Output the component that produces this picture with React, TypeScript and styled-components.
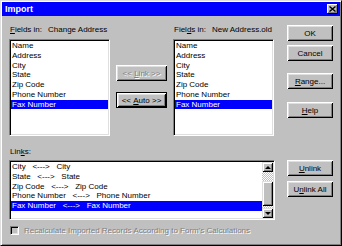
import React from "react";
import styled, { createGlobalStyle } from "styled-components";

const GlobalStyle = createGlobalStyle`
  html, body {
    margin: 0;
    padding: 0;
    background: #c0c0c0;
  }
  body {
    font-family: "Liberation Sans", Arial, sans-serif;
    font-size: 8px;
    color: #000;
  }
`;

const Window = styled.div`
  width: 342px;
  height: 246px;
  box-sizing: border-box;
  background: #c0c0c0;
  border: 1px solid;
  border-color: #dfdfdf #000 #000 #dfdfdf;
  box-shadow: inset 1px 1px #fff, inset -1px -1px #808080;
  padding: 1px;
  display: flex;
  flex-direction: column;
`;

const TitleBar = styled.div`
  height: 14px;
  background: #0000ff;
  display: flex;
  align-items: center;
  justify-content: space-between;
  padding: 0 2px 0 3px;
`;

const Title = styled.span`
  color: #fff;
  font-weight: bold;
  font-size: 9px;
  line-height: 14px;
`;

const CloseButton = styled.div`
  width: 11px;
  height: 10px;
  box-sizing: border-box;
  background: #c0c0c0;
  box-shadow: inset -1px -1px #000, inset 1px 1px #fff, inset -2px -2px #808080;
  display: flex;
  align-items: center;
  justify-content: center;
`;

const Body = styled.div`
  flex: 1;
  display: flex;
  flex-direction: column;
  padding: 9px 7px 0 7px;
`;

const TopGrid = styled.div`
  display: grid;
  grid-template-columns: 101px 51px 101px 1fr;
  column-gap: 6px;
`;

const Panel = styled.div`
  display: flex;
  flex-direction: column;
`;

const LabelRow = styled.div`
  display: flex;
  height: 10px;
  line-height: 10px;
  padding-left: 1px;
  white-space: nowrap;
`;

const LabelName = styled.span`
  width: 38px;
`;

const Key = styled.span`
  text-decoration: underline;
`;

const ListBox = styled.div<{ $height: number; $top: number }>`
  height: ${(p) => p.$height}px;
  margin-top: ${(p) => p.$top}px;
  box-sizing: border-box;
  background: #fff;
  border: 1px solid;
  border-color: #808080 #fff #fff #808080;
  box-shadow: inset 1px 1px #000, inset -1px -1px #dfdfdf;
  padding: 1px;
  display: flex;
  overflow: hidden;
`;

const Items = styled.div`
  flex: 1;
  display: flex;
  flex-direction: column;
`;

const Item = styled.div<{ $selected?: boolean }>`
  height: 9.75px;
  line-height: 9.75px;
  padding-left: 1px;
  white-space: pre;
  background: ${(p) => (p.$selected ? "#0000ff" : "transparent")};
  color: ${(p) => (p.$selected ? "#fff" : "#000")};
`;

const MidColumn = styled.div`
  display: flex;
  flex-direction: column;
  gap: 11px;
  padding-top: 40px;
`;

const ButtonColumn = styled.div<{ $top?: number }>`
  display: flex;
  flex-direction: column;
  justify-self: end;
  width: 46px;
  padding-top: ${(p) => p.$top ?? 0}px;
`;

const Button = styled.div<{ $gap?: number; $default?: boolean; $disabled?: boolean }>`
  height: 16px;
  margin-top: ${(p) => p.$gap ?? 0}px;
  box-sizing: border-box;
  background: #c0c0c0;
  display: flex;
  align-items: center;
  justify-content: center;
  white-space: pre;
  border: ${(p) => (p.$default ? "1px solid #000" : "none")};
  box-shadow: inset 1px 1px #fff, inset -1px -1px #000, inset 2px 2px #dfdfdf,
    inset -2px -2px #808080;
  color: ${(p) => (p.$disabled ? "#808080" : "#000")};
  text-shadow: ${(p) => (p.$disabled ? "1px 1px #fff" : "none")};
`;

const LinksGrid = styled.div`
  display: grid;
  grid-template-columns: 1fr 46px;
  column-gap: 12px;
  margin-top: 11px;
`;

const Scrollbar = styled.div`
  width: 11px;
  display: flex;
  flex-direction: column;
`;

const ArrowButton = styled.div<{ $down?: boolean }>`
  height: 10px;
  background: #c0c0c0;
  box-shadow: inset 1px 1px #dfdfdf, inset -1px -1px #000, inset 2px 2px #fff,
    inset -2px -2px #808080;
  display: flex;
  align-items: center;
  justify-content: center;
  &::after {
    content: "";
    border-left: 3px solid transparent;
    border-right: 3px solid transparent;
    ${(p) =>
      p.$down ? "border-top: 3px solid #000;" : "border-bottom: 3px solid #000;"}
  }
`;

const Track = styled.div<{ $height: number }>`
  height: ${(p) => p.$height}px;
  background-color: #fff;
  background-image: repeating-conic-gradient(#c0c0c0 0 25%, #fff 0 50%);
  background-size: 2px 2px;
`;

const Thumb = styled.div`
  height: 25px;
  background: #c0c0c0;
  box-shadow: inset 1px 1px #dfdfdf, inset -1px -1px #000, inset 2px 2px #fff,
    inset -2px -2px #808080;
`;

const CheckRow = styled.div`
  display: flex;
  align-items: center;
  gap: 5px;
  margin-top: 6px;
  padding-left: 1px;
  height: 9px;
`;

const CheckBox = styled.div`
  width: 9px;
  height: 9px;
  box-sizing: border-box;
  background: #c0c0c0;
  border: 1px solid;
  border-color: #808080 #fff #fff #808080;
  box-shadow: inset 1px 1px #000, inset -1px -1px #dfdfdf;
`;

const DisabledText = styled.span`
  color: #808080;
  text-shadow: 1px 1px #fff;
  white-space: nowrap;
`;

const fields = ["Name", "Address", "City", "State", "Zip Code", "Phone Number", "Fax Number"];
const links = ["City", "State", "Zip Code", "Phone Number", "Fax Number"];

const FieldList = ({ label, source }: { label: React.ReactNode; source: string }) => (
  <Panel>
    <LabelRow>
      <LabelName>{label}</LabelName>
      <span>{source}</span>
    </LabelRow>
    <ListBox $height={97} $top={4}>
      <Items>
        {fields.map((f, i) => (
          <Item key={f} $selected={i === fields.length - 1}>
            {f}
          </Item>
        ))}
      </Items>
    </ListBox>
  </Panel>
);

export default function App() {
  return (
    <>
      <GlobalStyle />
      <Window>
        <TitleBar>
          <Title>Import</Title>
          <CloseButton>
            <svg width="7" height="6" viewBox="0 0 7 6">
              <path d="M0.5 0.5 L6.5 5.5 M6.5 0.5 L0.5 5.5" stroke="#000" strokeWidth="1.4" />
            </svg>
          </CloseButton>
        </TitleBar>
        <Body>
          <TopGrid>
            <FieldList
              label={
                <>
                  <Key>F</Key>ields in:
                </>
              }
              source="Change Address"
            />
            <MidColumn>
              <Button $disabled>
                {"<< "}
                <Key>L</Key>
                {"ink >>"}
              </Button>
              <Button $default>
                {"<< "}
                <Key>A</Key>
                {"uto >>"}
              </Button>
            </MidColumn>
            <FieldList
              label={
                <>
                  Fiel<Key>d</Key>s in:
                </>
              }
              source="New Address.old"
            />
            <ButtonColumn>
              <Button>OK</Button>
              <Button $gap={4}>Cancel</Button>
              <Button $gap={12}>
                <Key>R</Key>ange...
              </Button>
              <Button $gap={13}>
                <Key>H</Key>elp
              </Button>
            </ButtonColumn>
          </TopGrid>
          <LinksGrid>
            <LabelRow>
              Lin<Key>k</Key>s:
            </LabelRow>
            <span />
            <ListBox $height={60} $top={3}>
              <Items>
                {links.map((l, i) => (
                  <Item key={l} $selected={i === links.length - 1}>
                    {`${l}   <--->   ${l}`}
                  </Item>
                ))}
              </Items>
              <Scrollbar>
                <ArrowButton />
                <Track $height={9} />
                <Thumb />
                <Track $height={2} />
                <ArrowButton $down />
              </Scrollbar>
            </ListBox>
            <ButtonColumn $top={3}>
              <Button>
                <Key>U</Key>nlink
              </Button>
              <Button $gap={5}>
                U<Key>n</Key>link All
              </Button>
            </ButtonColumn>
          </LinksGrid>
          <CheckRow>
            <CheckBox />
            <DisabledText>Recalculate Imported Records According to Form's Calculations</DisabledText>
          </CheckRow>
        </Body>
      </Window>
    </>
  );
}
